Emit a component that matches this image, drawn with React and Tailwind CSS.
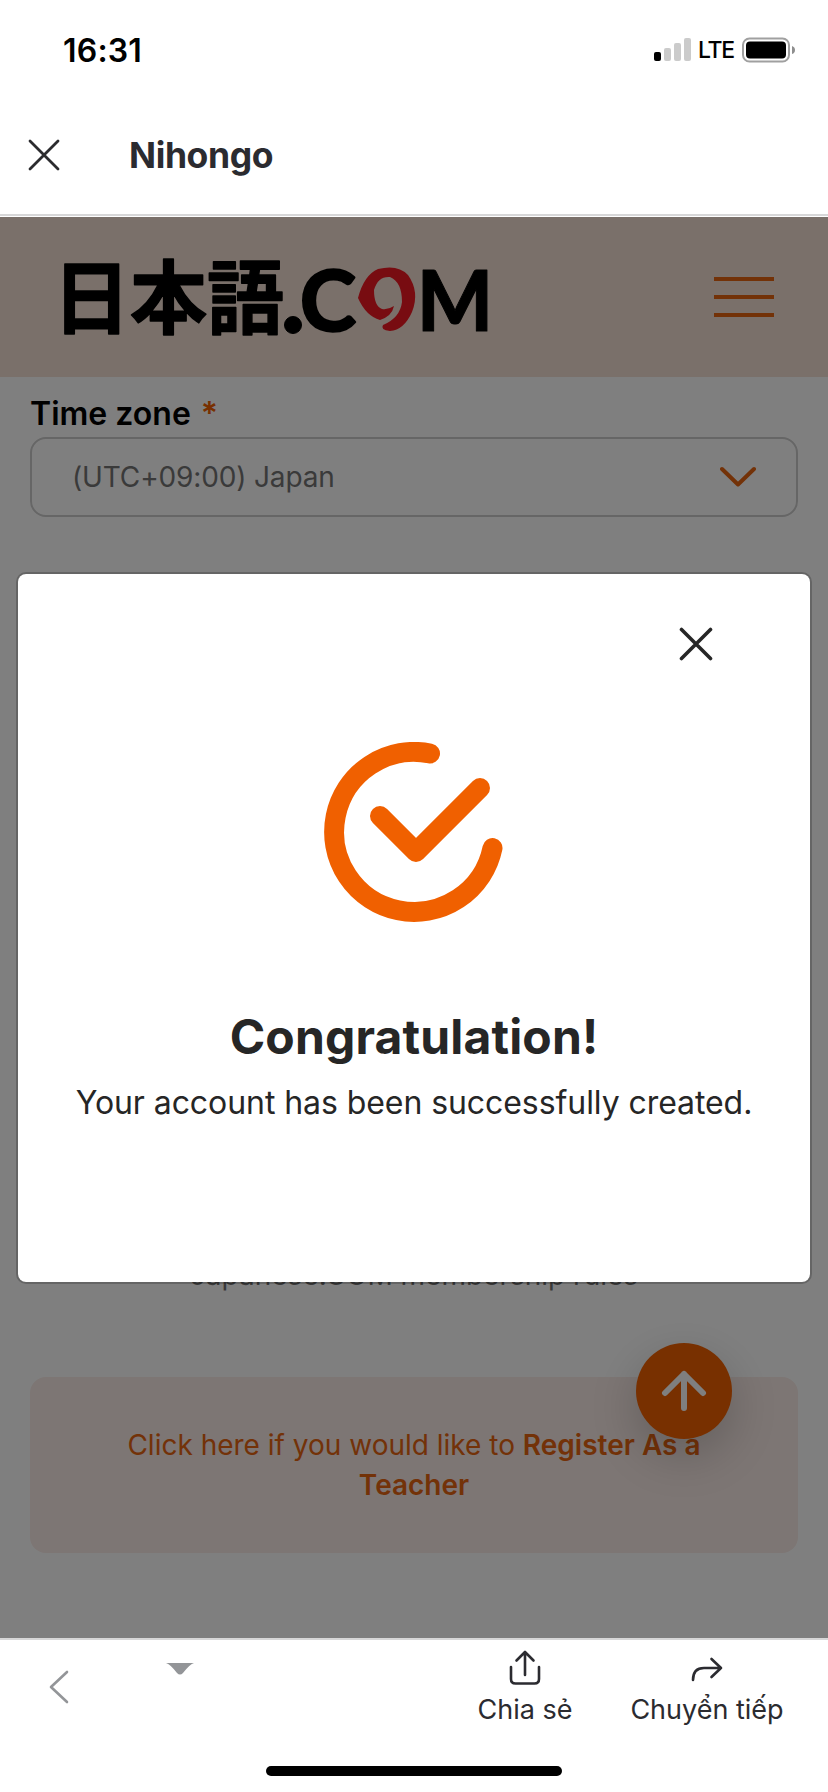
export default function App() {
  return (
    <div className="flex h-[1792px] w-[828px] flex-col overflow-hidden bg-white font-['Inter',sans-serif]">
      <div className="flex h-[98px] items-center justify-between pr-[33px] pl-[63px]">
        <span className="mt-[3px] text-[32px] font-semibold tracking-[0.2px] text-black">16:31</span>
        <div className="mt-px flex items-center">
          <svg width="38" height="24" viewBox="0 0 38 24">
            <rect x="0" y="14" width="7" height="9" rx="2" fill="#000" />
            <rect x="10" y="10" width="7" height="13" rx="2" fill="#cbcbcb" />
            <rect x="20" y="5" width="7" height="18" rx="2" fill="#cbcbcb" />
            <rect x="30" y="0" width="7" height="23" rx="2" fill="#cbcbcb" />
          </svg>
          <span className="ml-[6px] w-[37px] pt-px text-[23px] font-medium tracking-[-1.3px] text-black">LTE</span>
          <svg className="ml-[6px]" width="54" height="26" viewBox="0 0 54 26">
            <rect x="2" y="1.5" width="46" height="23" rx="6.5" fill="none" stroke="#a0a0a0" strokeWidth="2" />
            <rect x="5" y="4.500" width="40" height="17" rx="4" fill="#000" />
            <path d="M51 9 Q54 10 54 13 Q54 16 51 17 Z" fill="#8e8e8e" />
          </svg>
        </div>
      </div>
      <div className="flex h-[119px] shrink-0 flex-col">
        <div className="flex h-[116px] items-center pb-[2px] pl-7">
          <svg width="32" height="32" viewBox="0 0 32 32" fill="none" stroke="#2b2b2e" strokeWidth="2.8" strokeLinecap="round">
            <path d="M2 2 30 30M30 2 2 30" />
          </svg>
          <span className="mt-[2px] ml-[69px] text-[35.500px] font-bold tracking-[-0.4px] text-[#2b2b30]">Nihongo</span>
        </div>
        <div className="h-[2px] bg-[#d7d7d8]" />
      </div>

      <main className="relative flex h-[1421px] shrink-0 flex-col overflow-hidden bg-white">
        <header className="flex h-[160px] shrink-0 items-center justify-between bg-[#f4e0d4] pr-[54px] pl-[36px]">
          <svg width="480" height="150" viewBox="36 222 480 150">
            <g fill="#000" stroke="#000" strokeLinejoin="round">
              <text x="53" y="327" textLength="231" lengthAdjust="spacingAndGlyphs" fontFamily="Noto Sans CJK JP" fontSize="80" fontWeight="700" strokeWidth="1.5">日本語</text>
              <circle cx="293" cy="325" r="8.5" />
              <text x="300" y="331" textLength="56" lengthAdjust="spacingAndGlyphs" fontFamily="Lato" fontSize="84" fontWeight="700" strokeWidth="2.5">C</text>
              <text x="417" y="331" textLength="76" lengthAdjust="spacingAndGlyphs" fontFamily="Lato" fontSize="83" fontWeight="900" strokeWidth="1">M</text>
            </g>
            <path d="M358 298Q364 275 378 269Q398 264 408 275Q420 292 412 312Q404 330 390 331Q380 330 383 325Q400 318 402 302Q402 282 390 277Q378 276 374 290Q374 306 382 309Q388 310 394 306Q392 316 380 320Q366 316 358 298Z" fill="#f01822" />
          </svg>
          <div className="flex w-[60px] flex-col gap-[14px]">
            <div className="h-1 bg-[#e66410]" />
            <div className="h-1 bg-[#e66410]" />
            <div className="h-1 bg-[#e66410]" />
          </div>
        </header>
        <div className="flex flex-col px-[30px] pt-[15px]">
          <div className="mb-[2px] flex h-[43px] items-center text-[32px] font-semibold text-black">
            <span>Time zone</span>
            <span className="ml-[10px] text-[#f06000]">*</span>
          </div>
          <div className="flex h-20 items-center justify-between rounded-2xl border-2 border-[#cccccc] pr-[40px] pl-[40px]">
            <span className="text-[28px] tracking-[-0.15px] text-[#757575]">(UTC+09:00) Japan</span>
            <svg width="36" height="22" viewBox="0 0 36 22" fill="none" stroke="#e66410" strokeWidth="4" strokeLinecap="round" strokeLinejoin="round">
              <path d="M2 3 18 18.500 34 3" />
            </svg>
          </div>
        </div>
        <div className="mt-[738px] text-center text-[28px] leading-10 text-[#757575]">Japanese.COM membership rules</div>
        <div className="mx-[30px] mt-[82px] flex h-[176px] flex-col items-center rounded-2xl bg-[#faece8] pt-[48px] text-center text-[28px] leading-10 text-[#e66410]">
          <p>Click here if you would like to <b className="font-semibold">Register As a</b></p>
          <b className="font-semibold">Teacher</b>
        </div>
        <div className="absolute top-[1126px] left-[636px] flex size-24 items-center justify-center rounded-full bg-[#f06000] shadow-[0_16px_48px_rgba(0,0,0,0.2)]">
          <svg width="46" height="42" viewBox="0 0 46 42" fill="none" stroke="#fff" strokeWidth="6" strokeLinecap="round" strokeLinejoin="round">
            <path d="M23 4V38M4 23 23 4 42 23" />
          </svg>
        </div>
        <div className="absolute inset-0 bg-black/50">
          <div className="mx-4 mt-[355px] flex h-[712px] flex-col items-center rounded-[10px] border-2 border-black/20 bg-white bg-clip-padding">
            <svg className="mt-[53px] mr-[97px] self-end" width="34" height="34" viewBox="0 0 34 34" fill="none" stroke="#262626" strokeWidth="3.6" strokeLinecap="round">
              <path d="M2.500 2.500 31.500 31.500M31.500 2.500 2.500 31.500" />
            </svg>
            <svg className="mt-[81px]" width="180" height="180" viewBox="324 742 180 180" fill="none" stroke="#f06000" strokeWidth="20" strokeLinecap="round" strokeLinejoin="round">
              <path d="M430 753.500A80 80 0 1 0 492.500 848M380 816 416 852 480 788" />
            </svg>
            <h1 className="mt-[79px] text-[48px] leading-[72px] font-bold tracking-[0.15px] text-[#262626]">Congratulation!</h1>
            <p className="mt-[6px] text-[32px] leading-[48px] tracking-[-0.07px] text-[#262626]">Your account has been successfully created.</p>
          </div>
        </div>
      </main>

      <footer className="flex h-[154px] shrink-0 flex-col border-t-2 border-[#d7d7d8]">
        <div className="flex h-[126px]">
          <svg className="mt-[29px] ml-[48px]" width="22" height="36" viewBox="0 0 22 36" fill="none" stroke="#939598" strokeWidth="2.6" strokeLinecap="round" strokeLinejoin="round">
            <path d="M19 3 3 18 19 33" />
          </svg>
          <svg className="mt-[22px] ml-[96px]" width="28" height="14" viewBox="0 0 28 14">
            <path d="M0 1H28Q24 2 17 11Q14 14 11 11Q4 2 0 1Z" fill="#939598" />
          </svg>
          <div className="ml-[274px] flex w-[114px] flex-col items-center text-[#2b2b30]">
            <svg className="mt-[10px]" width="32" height="36" viewBox="0 0 32 36" fill="none" stroke="currentColor" strokeWidth="2.6" strokeLinecap="round" strokeLinejoin="round">
              <path d="M16 25V2M7.500 10.500 16 2 24.500 10.500M2 17V29Q2 33.500 6.500 33.500H25.500Q30 33.500 30 29V17" />
            </svg>
            <span className="mt-[4px] text-[27px] leading-10 whitespace-nowrap">Chia sẻ</span>
          </div>
          <div className="ml-[40px] flex w-[170px] flex-col items-center text-[#2b2b30]">
            <svg className="mt-[17px]" width="32" height="26" viewBox="0 0 32 26" fill="none" stroke="currentColor" strokeWidth="2.6" strokeLinecap="round" strokeLinejoin="round">
              <path d="M2 23Q2 11 13 11H30M20.500 2 30 11 20.500 20" />
            </svg>
            <span className="mt-[7px] text-[27px] leading-10 whitespace-nowrap">Chuyển tiếp</span>
          </div>
        </div>
        <div className="h-[10px] w-[296px] self-center rounded-full bg-black" />
      </footer>
    </div>
  );
}
